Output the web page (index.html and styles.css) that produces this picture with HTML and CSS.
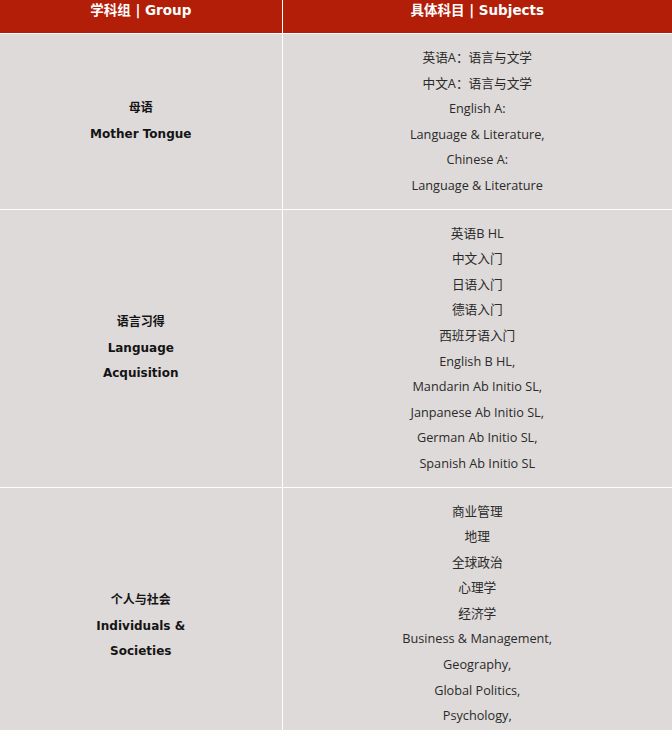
FILE: index.html
```html
<!DOCTYPE html>
<html lang="zh">
<head>
<meta charset="utf-8">
<link rel="stylesheet" href="styles.css">
</head>
<body>
<table class="subjects">
  <thead>
    <tr>
      <th class="col-group">学科组 | Group</th>
      <th class="col-subj">具体科目 | Subjects</th>
    </tr>
  </thead>
  <tbody>
    <tr class="r1">
      <td class="group"><p>母语</p><p>Mother Tongue</p></td>
      <td class="subj">
        <p>英语A：语言与文学</p>
        <p>中文A：语言与文学</p>
        <p>English A:</p>
        <p>Language &amp; Literature,</p>
        <p>Chinese A:</p>
        <p>Language &amp; Literature</p>
      </td>
    </tr>
    <tr class="r2">
      <td class="group"><p>语言习得</p><p>Language</p><p>Acquisition</p></td>
      <td class="subj">
        <p>英语B HL</p>
        <p>中文入门</p>
        <p>日语入门</p>
        <p>德语入门</p>
        <p>西班牙语入门</p>
        <p>English B HL,</p>
        <p>Mandarin Ab Initio SL,</p>
        <p>Janpanese Ab Initio SL,</p>
        <p>German Ab Initio SL,</p>
        <p>Spanish Ab Initio SL</p>
      </td>
    </tr>
    <tr class="r3">
      <td class="group"><p>个人与社会</p><p>Individuals &amp;</p><p>Societies</p></td>
      <td class="subj">
        <p>商业管理</p>
        <p>地理</p>
        <p>全球政治</p>
        <p>心理学</p>
        <p>经济学</p>
        <p>Business &amp; Management,</p>
        <p>Geography,</p>
        <p>Global Politics,</p>
        <p>Psychology,</p>
        <p>Economics</p>
      </td>
    </tr>
  </tbody>
</table>
</body>
</html>
```

FILE: styles.css
```css
html, body {
  margin: 0;
  padding: 0;
  background: #ffffff;
}
body {
  font-family: "Open Sans", "Noto Sans CJK SC", sans-serif;
  color: #333;
}
.subjects {
  width: 672px;
  border-collapse: collapse;
  table-layout: fixed;
}
.subjects th {
  background: #b21e07;
  color: #fff;
  font-family: "DejaVu Sans", "Noto Sans CJK SC", sans-serif;
  font-weight: bold;
  font-size: 13.5px;
  height: 33px;
  padding: 0 0 13px;
  line-height: 20px;
  box-sizing: border-box;
  vertical-align: top;
  border-right: 1px solid #fff;
  border-bottom: 1px solid #fff;
}
.subjects .col-group { width: 282px; }
.subjects th:last-child { border-right: none; }
.subjects td {
  background: #dedad9;
  text-align: center;
  vertical-align: middle;
  border-right: 1px solid #fff;
  border-bottom: 1px solid #fff;
  padding: 11px 0 10px;
}
.subjects td:last-child { border-right: none; }
.subjects p {
  margin: 0;
  line-height: 25.6px;
}
.group {
  font-family: "DejaVu Sans", "Noto Sans CJK SC", sans-serif;
  font-weight: bold;
  font-size: 12px;
  color: #141414;
}
.subj {
  font-size: 12.7px;
  color: #2a2a2a;
}
```
